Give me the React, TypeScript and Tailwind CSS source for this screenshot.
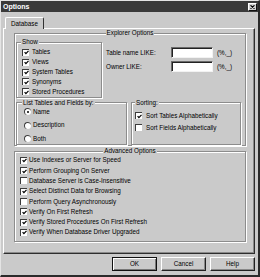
const GROUP =
  "m-0 min-w-0 border border-[#8c8c8c] p-0 shadow-[inset_1px_1px_0_#fff,1px_1px_0_#fff]";
const LEGEND = "bg-[#cacaca] px-[1px] leading-[8px]";

const SHOW = ["Tables", "Views", "System Tables", "Synonyms", "Stored Procedures"];
const LIST_BY = ["Name", "Description", "Both"];
const SORTING: [string, boolean][] = [
  ["Sort Tables Alphabetically", true],
  ["Sort Fields Alphabetically", false],
];
const ADVANCED: [string, boolean][] = [
  ["Use Indexes or Server for Speed", true],
  ["Perform Grouping On Server", true],
  ["Database Server is Case-Insensitive", false],
  ["Select Distinct Data for Browsing", true],
  ["Perform Query Asynchronously", false],
  ["Verify On First Refresh", true],
  ["Verify Stored Procedures On First Refresh", true],
  ["Verify When Database Driver Upgraded", true],
];

function Box({ checked }: { checked: boolean }) {
  return (
    <span className="flex h-[7px] w-[7px] shrink-0 items-center justify-center border-l border-t border-[#3c3c3c] bg-white">
      {checked && (
        <svg width="5" height="5" viewBox="0 0 5 5" className="block">
          <path d="M0.6 2.2 L1.9 3.7 L4.5 0.9" fill="none" stroke="#000" strokeWidth="1.2" />
        </svg>
      )}
    </span>
  );
}

function Radio({ on }: { on: boolean }) {
  return (
    <span className="flex h-[7px] w-[7px] shrink-0 items-center justify-center rounded-full border-l border-t border-[#3c3c3c] bg-white">
      {on && <span className="h-[2px] w-[2px] rounded-full bg-black" />}
    </span>
  );
}

function Field() {
  return (
    <span className="h-[11px] w-[42px] shrink-0 border border-b-[#f2f2f2] border-l-[#6a6a6a] border-r-[#f2f2f2] border-t-[#6a6a6a] bg-white shadow-[inset_1px_1px_0_#222]" />
  );
}

function Button({ label, main }: { label: string; main?: boolean }) {
  return (
    <button
      type="button"
      className={
        main
          ? "flex h-[14px] w-[45px] items-center justify-center border border-[#111] bg-[#cacaca] shadow-[inset_1px_1px_0_#fff,inset_-1px_-1px_0_#777]"
          : "flex h-[14px] w-[45px] items-center justify-center border border-b-[#222] border-l-white border-r-[#222] border-t-white bg-[#cacaca] shadow-[inset_-1px_-1px_0_#888]"
      }
    >
      {label}
    </button>
  );
}

export default function App() {
  return (
    <div className="flex h-[277px] w-[260px] flex-col overflow-hidden border-b-2 border-l border-r-2 border-t border-b-[#2a2a2a] border-l-[#e4e4e4] border-r-[#2a2a2a] border-t-[#e4e4e4] bg-[#cacaca] font-['Liberation_Sans',Arial,sans-serif] text-[6.3px] leading-[8px] text-black">
      {/* title bar */}
      <div className="flex h-[11px] shrink-0 items-center justify-between bg-[#3a3a3a] pl-[2px] pr-[1px]">
        <span className="text-[7px] font-bold leading-none text-white">Options</span>
        <span className="flex h-[8px] w-[9px] items-center justify-center border border-b-[#111] border-l-white border-r-[#111] border-t-white bg-[#d2d2d2]">
          <svg width="5" height="4" viewBox="0 0 5 4" className="block">
            <path d="M0.5 0.3 L4.5 3.7 M4.5 0.3 L0.5 3.7" stroke="#000" strokeWidth="1.1" />
          </svg>
        </span>
      </div>

      <div className="ml-[2px] flex w-[252px] flex-col">
        {/* tab */}
        <div className="relative z-10 -mb-px ml-[2px] mt-[5px] flex h-[12px] w-[39px] items-center justify-center rounded-t-[2px] border-l border-r border-t border-l-white border-r-[#333] border-t-white bg-[#cacaca] pt-[1px]">
          Database
        </div>

        {/* tab panel */}
        <div className="flex h-[226px] w-[252px] flex-col border border-b-[#2e2e2e] border-l-white border-r-[#2e2e2e] border-t-white pl-[10px] shadow-[inset_-1px_-1px_0_#8a8a8a]">
          <fieldset className={`${GROUP} w-[232px]`}>
            <legend className={`${LEGEND} mx-auto`}>Explorer Options</legend>
            <div className="ml-[1px] mt-[1px] flex">
              <fieldset className={`${GROUP} w-[86px]`}>
                <legend className={`${LEGEND} ml-[4px]`}>Show</legend>
                <div className="flex flex-col pl-[5px] pt-[1.5px]">
                  {SHOW.map((s) => (
                    <div key={s} className="flex h-[9.85px] items-center gap-[3px]">
                      <Box checked />
                      <span>{s}</span>
                    </div>
                  ))}
                </div>
              </fieldset>
              <div className="ml-[4px] flex flex-col gap-[3px] pt-[9px]">
                <div className="flex items-center">
                  <span className="w-[65px]">Table name LIKE:</span>
                  <Field />
                  <span className="ml-[4px]">(%,_)</span>
                </div>
                <div className="flex items-center">
                  <span className="w-[65px]">Owner LIKE:</span>
                  <Field />
                  <span className="ml-[4px]">(%,_)</span>
                </div>
              </div>
            </div>

            <div className="ml-[1px] mt-[1px] flex gap-[4px]">
              <fieldset className={`${GROUP} w-[111px]`}>
                <legend className={`${LEGEND} ml-[5px]`}>List Tables and Fields by:</legend>
                <div className="flex flex-col gap-[3.5px] pl-[7px]">
                  {LIST_BY.map((s, i) => (
                    <div key={s} className="flex h-[10px] items-center gap-[2px]">
                      <Radio on={i === 0} />
                      <span>{s}</span>
                    </div>
                  ))}
                </div>
              </fieldset>
              <fieldset className={`${GROUP} w-[110px]`}>
                <legend className={`${LEGEND} ml-[3px]`}>Sorting:</legend>
                <div className="flex flex-col gap-[2px] pl-[3px] pt-[4px]">
                  {SORTING.map(([s, c]) => (
                    <div key={s} className="flex h-[10px] items-center gap-[4px]">
                      <Box checked={c} />
                      <span>{s}</span>
                    </div>
                  ))}
                </div>
              </fieldset>
            </div>
          </fieldset>

          <fieldset className={`${GROUP} mt-[1.5px] w-[232px]`}>
            <legend className={`${LEGEND} mx-auto`}>Advanced Options</legend>
            <div className="flex flex-col pb-[3.5px] pl-[5px]">
              {ADVANCED.map(([s, c]) => (
                <div key={s} className="flex h-[10.3px] items-center gap-[2px]">
                  <Box checked={c} />
                  <span>{s}</span>
                </div>
              ))}
            </div>
          </fieldset>
        </div>

        {/* buttons */}
        <div className="mt-[3px] flex justify-end gap-[4px]">
          <Button label="OK" main />
          <Button label="Cancel" />
          <Button label="Help" />
        </div>
      </div>
    </div>
  );
}
